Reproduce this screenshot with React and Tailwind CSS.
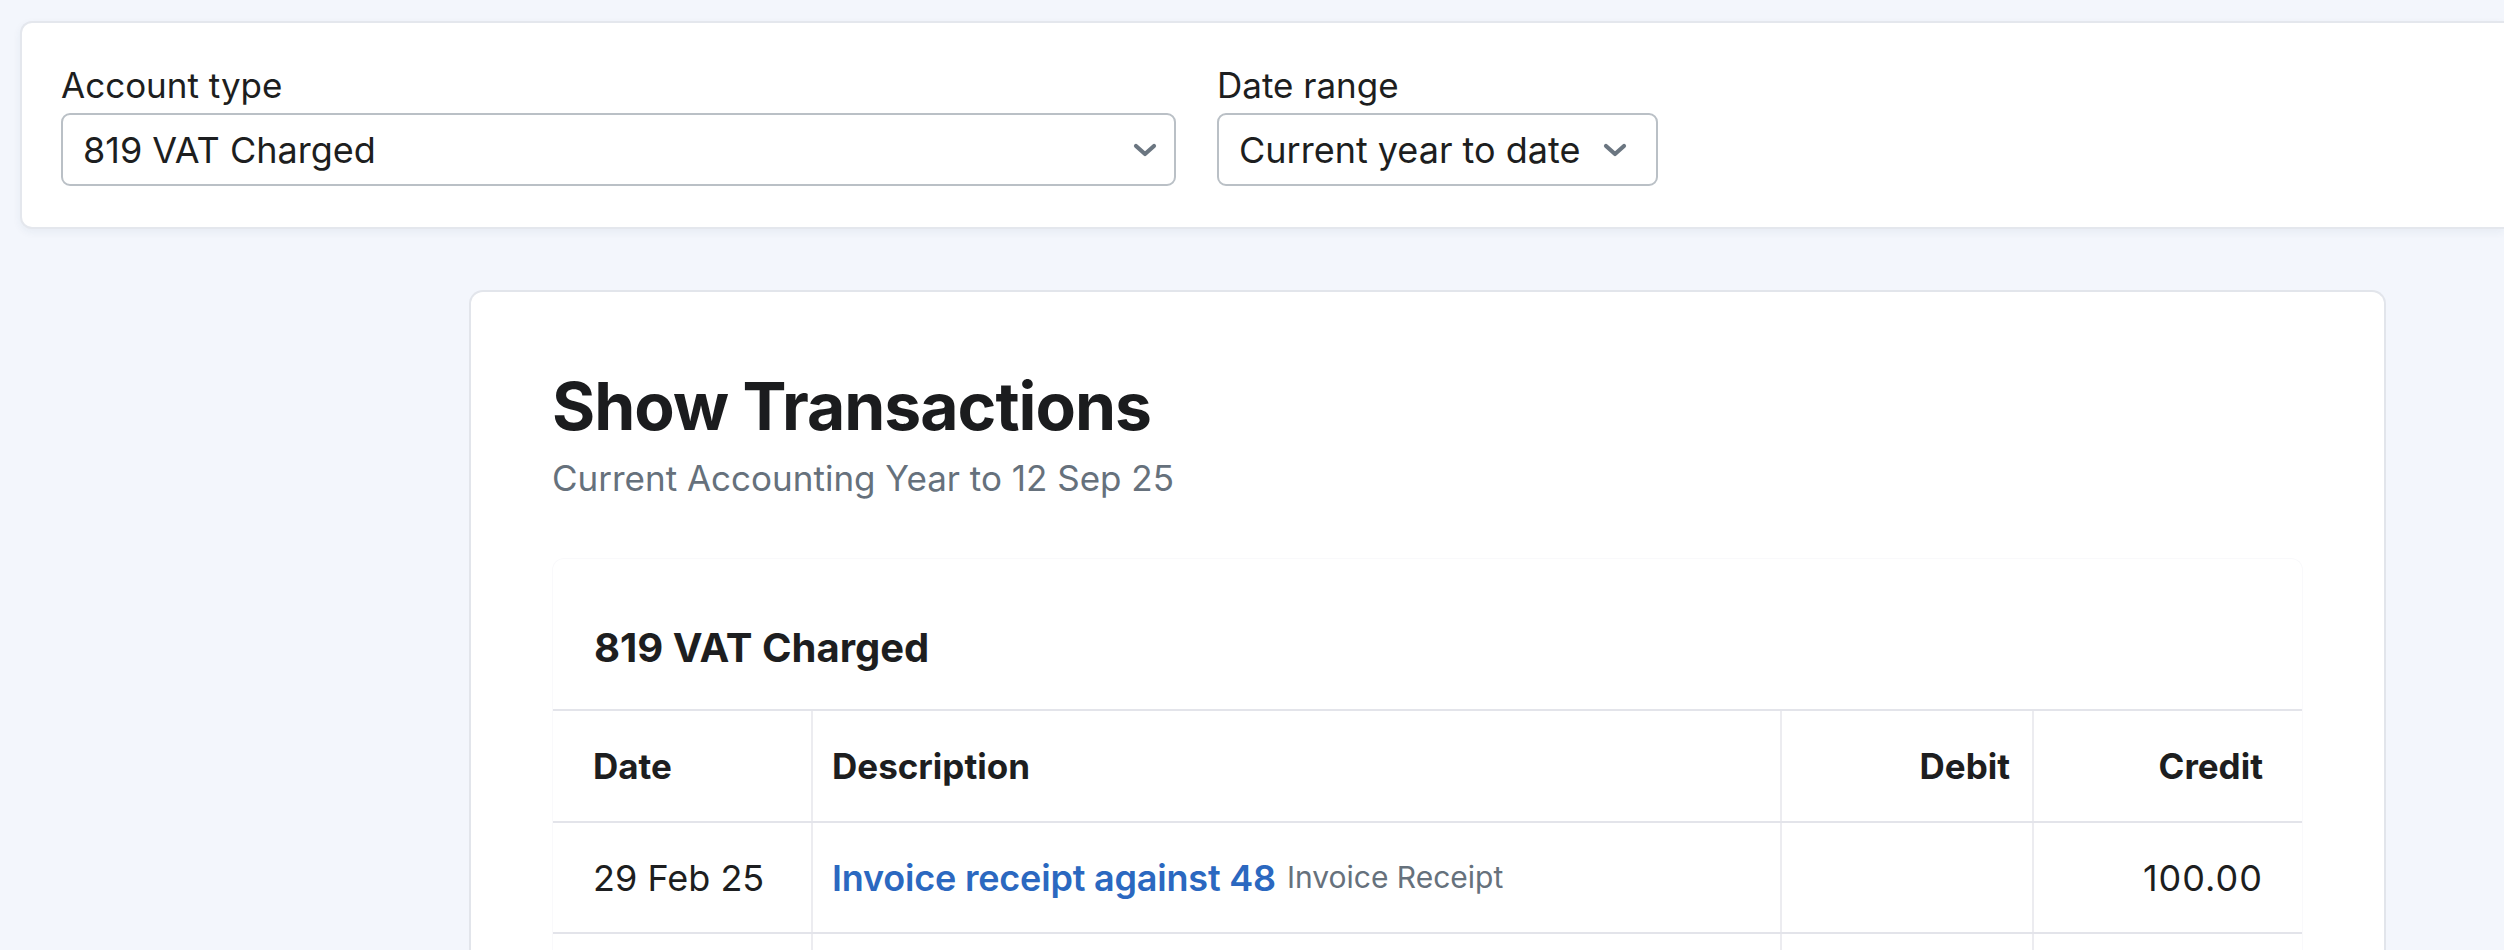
import React from 'react';

const Chevron = ({ className }) => (
  <svg viewBox="0 0 24 14" className={className} fill="none" stroke="currentColor" strokeWidth="4.2" strokeLinecap="round" strokeLinejoin="round">
    <path d="M3 3l9 8 9-8" />
  </svg>
);

const SelectField = ({ label, value, widthClass }) => (
  <div className="flex flex-col">
    <label className="text-[35px] leading-[40px] text-[#1d1e20]">{label}</label>
    <div className={`mt-2 flex h-[73px] items-center justify-between rounded-[9px] border-2 border-[#bac0c6] bg-white pl-5 ${widthClass}`}>
      <span className="whitespace-nowrap text-[36px] leading-[46px] text-[#1d1e20]">{value}</span>
      <Chevron className="h-[14px] w-[24px] shrink-0 text-[#6b7681]" />
    </div>
  </div>
);

const rows = [
  { date: '29 Feb 25', title: 'Invoice receipt against 48', kind: 'Invoice Receipt', debit: '', credit: '100.00' },
];

export default function App() {
  return (
    <div className="min-h-screen overflow-hidden bg-[#f3f6fc] pt-[21px] font-['Inter',sans-serif] text-[#1d1e20]">
      {/* Filters bar */}
      <div className="ml-5 flex h-[208px] gap-[41px] rounded-l-[12px] border-2 border-r-0 border-[#e4e7ed] bg-white pl-[39px] pt-[42px] shadow-[0_3px_8px_rgba(40,60,110,0.06)]">
        <SelectField label="Account type" value="819 VAT Charged" widthClass="w-[1115px] pr-[17px]" />
        <SelectField label="Date range" value="Current year to date" widthClass="w-[441px] pr-[29px]" />
      </div>

      {/* Report card */}
      <div className="ml-[469px] mt-[61px] w-[1917px] rounded-t-[14px] border-2 border-b-0 border-[#e2e5eb] bg-white px-[81px] pt-[74px] pb-10">
        <h1 className="text-[66px] font-bold leading-[80px] tracking-[-1px] text-[#1b1c1e]">Show Transactions</h1>
        <p className="mt-[10px] text-[35px] leading-[44px] text-[#66717c]">Current Accounting Year to 12 Sep 25</p>

        <div className="mt-[58px] rounded-t-[12px] border border-b-0 border-[#f9f9fb]">
          <h2 className="px-[41px] pt-[64px] pb-[36px] text-[40px] font-bold leading-[50px]">819 VAT Charged</h2>

          <div className="grid grid-cols-[258px_1fr_252px_270px] border-t-2 border-[#e3e4ea] text-[36px]">
            <div className="flex h-[110px] items-center pl-10 text-[35px] font-bold">Date</div>
            <div className="flex h-[110px] items-center border-l-2 border-[#ececf0] pl-[19px] text-[35px] font-bold">Description</div>
            <div className="flex h-[110px] items-center justify-end border-l-2 border-[#ececf0] pr-[22px] text-[35px] font-bold">Debit</div>
            <div className="flex h-[110px] items-center justify-end border-l-2 border-[#ececf0] pr-[39px] text-[35px] font-bold">Credit</div>

            {rows.map((r, i) => (
              <React.Fragment key={i}>
                <div className="col-span-4 border-t-2 border-[#e3e4ea]" />
                <div className="flex h-[109px] items-center pl-10">{r.date}</div>
                <div className="flex h-[109px] items-center border-l-2 border-[#ececf0] pl-[19px]">
                  <a href="#" className="font-semibold tracking-[-0.2px] text-[#2b68c0]">{r.title}</a>
                  <span className="ml-[11px] text-[30px] text-[#66717c]">{r.kind}</span>
                </div>
                <div className="flex h-[109px] items-center justify-end border-l-2 border-[#ececf0] pr-[22px]">{r.debit}</div>
                <div className="flex h-[109px] items-center justify-end border-l-2 border-[#ececf0] pr-[39px] tracking-[1px]">{r.credit}</div>
              </React.Fragment>
            ))}

            {/* next row continues below the fold */}
            <div className="col-span-4 border-t-2 border-[#e3e4ea]" />
            <div className="h-[109px]" />
            <div className="h-[109px] border-l-2 border-[#ececf0]" />
            <div className="h-[109px] border-l-2 border-[#ececf0]" />
            <div className="h-[109px] border-l-2 border-[#ececf0]" />
          </div>
        </div>
      </div>
    </div>
  );
}
